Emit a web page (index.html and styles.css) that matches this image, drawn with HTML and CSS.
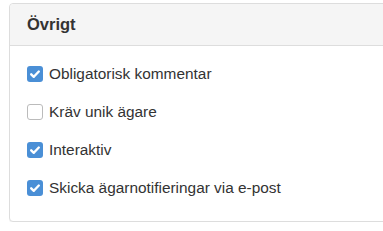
FILE: index.html
```html
<!DOCTYPE html>
<html lang="sv">
<head>
  <meta charset="UTF-8" />
  <title>Övrigt</title>
  <link rel="stylesheet" href="styles.css">
</head>
<body>
<div class="panel">
  <div class="panel-heading">Övrigt</div>
  <div class="panel-body">
    <label class="check"><span class="box on"><svg viewBox="0 0 16 16"><path d="M4.2 8.3l2.6 2.5 5-5.3" /></svg></span>Obligatorisk kommentar</label>
    <label class="check"><span class="box"></span>Kräv unik ägare</label>
    <label class="check"><span class="box on"><svg viewBox="0 0 16 16"><path d="M4.2 8.3l2.6 2.5 5-5.3" /></svg></span>Interaktiv</label>
    <label class="check"><span class="box on"><svg viewBox="0 0 16 16"><path d="M4.2 8.3l2.6 2.5 5-5.3" /></svg></span>Skicka ägarnotifieringar via e-post</label>
  </div>
</div>
</body>
</html>
```

FILE: styles.css
```css
body {
      margin: 3px 0 0 9px;
      font-family: "Liberation Sans", Arial, sans-serif;
      color: #333;
      overflow: hidden;
    }
.panel {
      width: 400px;
      border: 1px solid #ddd;
      border-radius: 4px;
      background: #fff;
      box-shadow: 0 1px 1px rgba(0,0,0,0.05);
    }
.panel-heading {
      background: #f5f5f5;
      border-bottom: 1px solid #ddd;
      border-radius: 4px 4px 0 0;
      height: 41px;
      line-height: 41px;
      padding-left: 17px;
      font-size: 16.5px;
      font-weight: bold;
    }
.panel-body {
      padding: 20px 17px 3px;
    }
.check {
      display: flex;
      align-items: center;
      height: 16px;
      margin-bottom: 22px;
      font-size: 15.4px;
    }
.box {
      box-sizing: border-box;
      width: 16px;
      height: 16px;
      margin-right: 6px;
      border: 1px solid #bbb;
      border-radius: 3px;
      background: #fff;
    }
.box.on {
      border: none;
      background: #4a8fd6;
    }
.box svg {
      display: block;
      width: 16px;
      height: 16px;
      fill: none;
      stroke: #fff;
      stroke-width: 2.4;
      stroke-linecap: round;
      stroke-linejoin: round;
    }
```
